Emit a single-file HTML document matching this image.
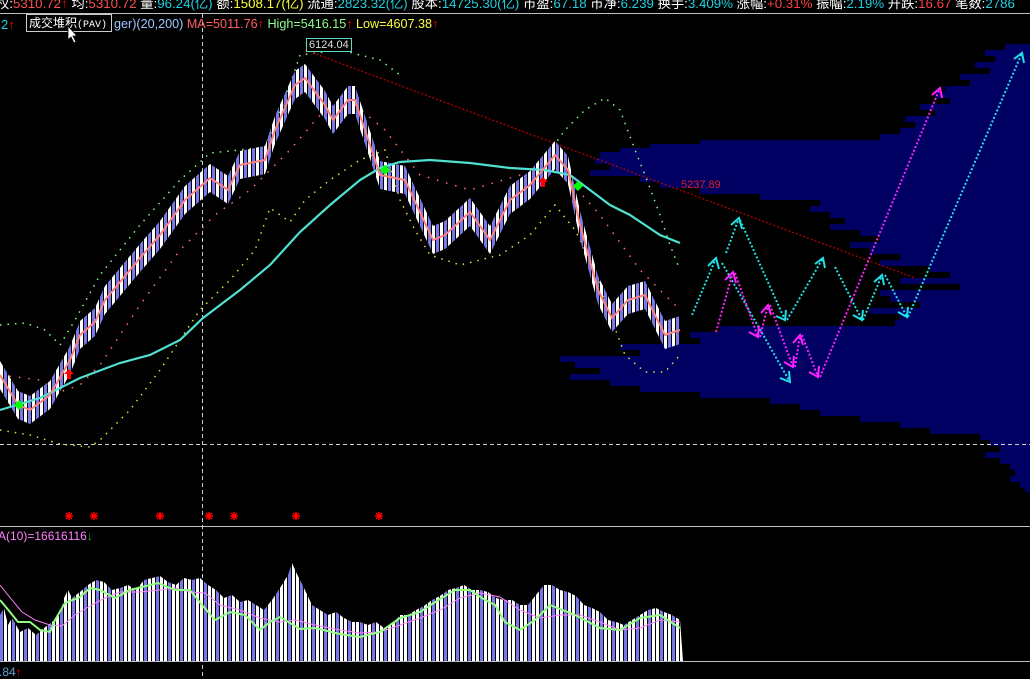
<!DOCTYPE html>
<html><head><meta charset="utf-8"><style>
html,body{margin:0;padding:0;background:#000;width:1030px;height:679px;overflow:hidden;position:relative;font-family:"Liberation Sans","Noto Sans CJK SC",sans-serif}
.t{position:absolute;white-space:nowrap;font-size:13px;line-height:15px}
svg{position:absolute;left:0;top:0}
</style></head><body>
<svg width="1030" height="679" viewBox="0 0 1030 679" xmlns="http://www.w3.org/2000/svg">
<defs>
<pattern id="st" patternUnits="userSpaceOnUse" x="0" y="0" width="8" height="679">
<rect x="0" y="0" width="3" height="679" fill="#fff"/><rect x="4" y="0" width="3" height="679" fill="#7878e8"/>
</pattern>
<pattern id="st2" patternUnits="userSpaceOnUse" x="0" y="0" width="12" height="679">
<rect x="0" y="0" width="3" height="679" fill="#7878e8"/><rect x="4" y="0" width="3" height="679" fill="#fff"/><rect x="8" y="0" width="3" height="679" fill="#fff"/>
</pattern>
</defs>
<path fill="#000062" d="M1030,44 H1005 V50 H985 V56 H995 V62 H975 V68 H990 V74 H960 V80 H970 V86 H945 V92 H935 V98 H950 V104 H920 V110 H935 V116 H905 V122 H915 V128 H900 V134 H880 V140 H700 V144 H650 V148 H620 V152 H600 V158 H595 V164 H610 V170 H590 V176 H640 V182 H660 V188 H700 V194 H760 V200 H820 V206 H810 V212 H830 V218 H845 V224 H830 V230 H860 V236 H880 V242 H850 V248 H870 V254 H900 V260 H880 V266 H930 V272 H950 V278 H900 V284 H960 V290 H880 V296 H890 V302 H920 V308 H870 V314 H900 V320 H895 V326 H720 V332 H690 V338 H700 V344 H620 V350 H640 V356 H560 V362 H575 V368 H600 V374 H570 V380 H610 V386 H640 V392 H700 V398 H770 V404 H800 V410 H820 V416 H860 V422 H900 V428 H930 V434 H980 V440 H990 V446 H1000 V452 H985 V458 H1000 V464 H1010 V470 H1015 V476 H1010 V482 H1020 V488 H1025 V492 H1030 Z"/>
<line x1="0" y1="13.5" x2="1030" y2="13.5" stroke="#c0c0c0"/>
<line x1="0" y1="526.5" x2="1030" y2="526.5" stroke="#c0c0c0"/>
<line x1="0" y1="661.5" x2="1030" y2="661.5" stroke="#c0c0c0"/>
<line x1="202.5" y1="14" x2="202.5" y2="679" stroke="#ccc" stroke-dasharray="4,3"/>
<line x1="0" y1="444.5" x2="1030" y2="444.5" stroke="#ccc" stroke-dasharray="4,3"/>
<g fill="none" stroke-width="1.5" stroke-dasharray="1.5,6">
<polyline stroke="#80ff80" points="0,325 25,323 45,330 60,345 75,320 100,275 140,225 180,180 210,153 240,150 265,147 285,100 300,55 340,50 380,60 400,75"/>
<polyline stroke="#80ff80" points="540,165 565,130 585,110 605,98 620,110 635,150 645,175 660,215 670,245 680,270"/>
<polyline stroke="#e0e040" points="0,430 30,435 60,444 90,447 100,440 130,410 160,370 200,310 230,280 255,250 270,208 290,222 305,200 330,180 360,160 385,150 400,200 415,230 430,255 460,265 500,255 530,235 555,205 575,230 595,270 610,315 625,355 645,372 665,372 680,355"/>
<polyline stroke="#ff7070" stroke-dasharray="1.5,8" points="0,375 40,380 60,392 80,385 100,365 140,305 180,250 215,215 250,190 290,150 320,115 355,105 385,130 420,175 470,190 520,175 560,170 600,215 640,270 680,310"/>
</g>
<line x1="305" y1="50" x2="915" y2="278" stroke="#c00000" stroke-width="1.2" stroke-dasharray="2,2"/>
<polygon fill="url(#st)" points="0,361 18,391 30,396 50,381 70,346 80,321 95,308 105,286 120,268 140,244 160,221 185,186 210,164 228,176 240,151 265,146 275,116 295,71 305,64 325,91 333,106 348,86 355,86 370,131 380,161 405,166 433,226 445,221 470,198 490,226 510,186 530,171 555,141 568,156 580,211 598,276 612,304 628,286 645,281 665,321 680,316 680,344 665,349 645,309 628,314 612,332 598,304 580,239 568,184 555,169 530,199 510,214 490,254 470,226 445,249 433,254 405,194 380,189 370,159 355,114 348,114 333,134 325,119 305,92 295,99 275,144 265,174 240,179 228,204 210,192 185,214 160,249 140,272 120,296 105,314 95,336 80,349 70,374 50,409 30,424 18,419 0,389"/>
<polyline fill="none" stroke="#50e0d0" stroke-width="2.2" points="0,410 40,398 80,378 120,363 150,355 180,340 203,318 240,290 270,265 300,232 330,205 360,180 380,168 400,162 430,160 470,163 510,168 545,170 570,175 590,190 610,205 630,215 660,235 680,243"/>
<polyline fill="none" stroke="#ff8080" stroke-width="2" points="0,375 18,405 30,410 50,395 70,360 80,335 95,322 105,300 120,282 140,258 160,235 185,200 210,178 228,190 240,165 265,160 275,130 295,85 305,78 325,105 333,120 348,100 355,100 370,145 380,175 405,180 433,240 445,235 470,212 490,240 510,200 530,185 555,155 568,170 580,225 598,290 612,318 628,300 645,295 665,335 680,330"/>
<path d="M14 405l5-5 5 5-5 5z M380 170l5-5 5 5-5 5z M573 186l5-5 5 5-5 5z" fill="#0f0"/>
<path d="M64 374l5-5 5 5h-3v5h-4v-5z M538 182l5-5 5 5h-3v5h-4v-5z" fill="#f00"/>
<g fill="none" stroke="#20e0e8" stroke-width="2">
<g stroke-dasharray="2,2">
<line x1="692" y1="315" x2="716" y2="258"/><line x1="726" y1="253" x2="739" y2="218"/><line x1="740" y1="220" x2="785" y2="320"/><line x1="722" y1="263" x2="790" y2="382"/><line x1="787" y1="320" x2="823" y2="258"/><line x1="835" y1="267" x2="862" y2="320"/><line x1="863" y1="320" x2="882" y2="275"/><line x1="885" y1="275" x2="907" y2="317"/><line x1="908" y1="317" x2="1022" y2="53"/>
</g>
<polyline points="708,266 716,258 719,269"/><polyline points="731,225 739,218 742,229"/><polyline points="776,316 785,320 786,310"/><polyline points="780,378 790,382 789,371"/><polyline points="815,264 823,258 825,268"/><polyline points="853,315 862,320 863,310"/><polyline points="874,282 882,275 884,285"/><polyline points="898,312 907,317 908,307"/><polyline points="1014,59 1022,53 1024,63"/>
</g>
<g fill="none" stroke="#ff20ff" stroke-width="2">
<g stroke-dasharray="2,2">
<line x1="716" y1="332" x2="733" y2="272"/><line x1="735" y1="273" x2="758" y2="337"/><line x1="760" y1="337" x2="768" y2="305"/><line x1="770" y1="305" x2="793" y2="367"/><line x1="795" y1="367" x2="800" y2="335"/><line x1="802" y1="335" x2="818" y2="377"/><line x1="820" y1="377" x2="940" y2="88"/>
</g>
<polyline points="725,280 733,272 736,283"/><polyline points="749,332 758,337 759,326"/><polyline points="761,313 768,305 771,315"/><polyline points="784,362 793,367 794,356"/><polyline points="793,343 800,335 803,345"/><polyline points="809,372 818,377 819,366"/><polyline points="932,95 940,88 942,98"/>
</g>
<g stroke="#f00" stroke-width="1.5">
<path d="M65 516h8M69 512v8M66 513l6 6M72 513l-6 6"/>
<path d="M90 516h8M94 512v8M91 513l6 6M97 513l-6 6"/>
<path d="M156 516h8M160 512v8M157 513l6 6M163 513l-6 6"/>
<path d="M205 516h8M209 512v8M206 513l6 6M212 513l-6 6"/>
<path d="M230 516h8M234 512v8M231 513l6 6M237 513l-6 6"/>
<path d="M292 516h8M296 512v8M293 513l6 6M299 513l-6 6"/>
<path d="M375 516h8M379 512v8M376 513l6 6M382 513l-6 6"/>
</g>
<polygon fill="url(#st2)" points="0,615 4,608 8,625 12,618 16,625 20,632 28,628 36,635 44,628 52,622 60,615 64,598 68,590 72,598 80,592 88,585 96,580 104,582 112,590 120,588 128,585 136,590 144,580 152,578 160,576 168,582 176,585 184,578 192,580 200,578 208,585 216,590 224,598 232,595 240,602 248,600 256,605 264,610 272,600 280,588 288,575 292,563 296,572 304,588 312,605 320,610 328,615 336,612 344,618 352,622 360,622 368,625 376,622 384,628 392,624 400,615 408,615 416,610 424,606 432,600 440,596 448,590 456,588 464,585 472,590 480,590 488,592 496,598 504,600 512,600 520,605 528,605 536,595 544,585 552,585 560,590 568,592 576,596 584,605 592,608 600,612 608,620 616,622 624,625 632,620 640,615 648,610 656,608 664,612 672,615 680,620 683,661 0,661"/>
<polyline fill="none" stroke="#ff80ff" stroke-width="1" points="0,585 12,600 22,612 35,620 50,625 62,626 75,615 90,606 105,598 120,592 140,592 160,590 175,588 190,592 205,593 220,605 240,610 260,618 280,622 295,620 315,625 340,630 360,633 380,632 400,625 420,618 440,610 460,598 480,593 500,597 520,610 540,618 560,615 580,615 600,622 620,630 640,628 660,620 680,622"/>
<polyline fill="none" stroke="#90ff80" stroke-width="2" points="0,600 10,612 18,622 30,622 40,630 50,632 55,620 65,603 80,597 90,588 100,590 115,598 130,590 150,585 158,583 175,590 190,590 202,605 215,620 230,612 245,615 260,630 270,622 280,617 300,629 315,628 340,634 360,637 380,632 400,618 420,612 440,599 455,590 470,590 485,600 495,605 505,622 520,630 535,620 550,605 575,615 600,628 620,630 640,618 660,615 680,628"/>
</svg>
<div class="t" style="left:-4px;top:-4px;color:#fff;font-size:13.3px">权:<span style="color:#ff5050">5310.72</span><span style="color:#f00">↑</span> 均:<span style="color:#ff5050">5310.72</span> 量:<span style="color:#20d0e0">96.24(亿)</span> 额:<span style="color:#ffff40">1508.17(亿)</span> 流通:<span style="color:#20d0e0">2823.32(亿)</span> 股本:<span style="color:#20d0e0">14725.30(亿)</span> 市盈:<span style="color:#20d0e0">67.18</span> 市净:<span style="color:#20d0e0">6.239</span> 换手:<span style="color:#20d0e0">3.409%</span> 涨幅:<span style="color:#ff4040">+0.31%</span> 振幅:<span style="color:#20d0e0">2.19%</span> 开跌:<span style="color:#ff4040">16.67</span> 笔数:<span style="color:#20d0e0">2786</span></div>
<div class="t" style="left:1px;top:17px;font-size:13px"><span style="color:#20d0e0">2</span><span style="color:#f00">↑</span></div>
<div class="t" style="left:114px;top:17px;font-size:12.6px"><span style="color:#a0c8ff">ger)(20,200)</span> <span style="color:#ff6060">MA=5011.76</span><span style="color:#f00">↑</span> <span style="color:#90ff90">High=5416.15</span><span style="color:#f00">↑</span> <span style="color:#ffff40">Low=4607.38</span><span style="color:#f00">↑</span></div>
<div class="t" style="left:26px;top:14px;width:82px;height:16px;border:1px solid #ccc;color:#fff;font-size:12px;line-height:16px;background:#000;padding-left:2px">成交堆积<span style="font-family:'Liberation Mono',monospace;font-size:10px">(PAV)</span></div>
<div class="t" style="left:306px;top:38px;border:1px solid #60d8c8;color:#ddd;font-size:11px;line-height:12px;padding:0 2px;background:#000">6124.04</div>
<div class="t" style="left:681px;top:178px;color:#e02020;font-size:11px">5237.89</div>
<div class="t" style="left:-2px;top:529px;color:#ff80ff;font-size:12px">A(10)=16616116<span style="color:#0c0">↓</span></div>
<div class="t" style="left:-1px;top:665px;color:#60a0d0;font-size:12px">.84<span style="color:#f00">↑</span></div>
<svg width="1030" height="679" style="pointer-events:none"><path d="M68 26v14l3-3 3 6 2-1-3-6h4z" fill="#fff" stroke="#000" stroke-width="0.8"/></svg>
</body></html>
